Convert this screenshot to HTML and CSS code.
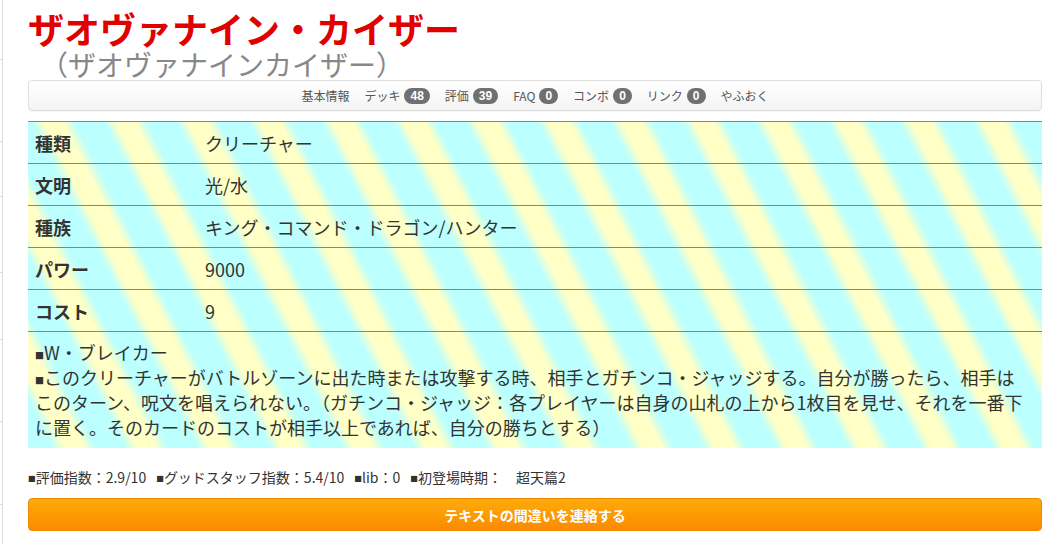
FILE: index.html
```html
<!DOCTYPE html>
<html lang="ja">
<head>
<meta charset="utf-8">
<title>ザオヴァナイン・カイザー</title>
<link rel="stylesheet" href="styles.css">
</head>
<body>
<div class="page">
  <div class="side">
    <div class="tick t1"></div>
    <div class="tick t2"></div>
    <div class="tick t3"></div>
    <div class="tick t4"></div>
    <div class="tick t5"></div>
    <div class="tick t6"></div>
    <div class="tick t7"></div>
  </div>
  <div class="main">
    <h1 class="title">ザオヴァナイン・カイザー</h1>
    <div class="subtitle">（ザオヴァナインカイザー）</div>
    <nav class="tabs">
      <span class="tab">基本情報</span>
      <span class="tab">デッキ<span class="badge">48</span></span>
      <span class="tab">評価<span class="badge">39</span></span>
      <span class="tab">FAQ<span class="badge">0</span></span>
      <span class="tab">コンボ<span class="badge">0</span></span>
      <span class="tab">リンク<span class="badge">0</span></span>
      <span class="tab">やふおく</span>
    </nav>
    <div class="spec">
      <div class="row"><div class="label">種類</div><div class="value">クリーチャー</div></div>
      <div class="row"><div class="label">文明</div><div class="value">光/水</div></div>
      <div class="row"><div class="label">種族</div><div class="value">キング・コマンド・ドラゴン/ハンター</div></div>
      <div class="row"><div class="label">パワー</div><div class="value">9000</div></div>
      <div class="row"><div class="label">コスト</div><div class="value">9</div></div>
      <div class="desc"><span class="sq">■</span>W・ブレイカー<br><span class="sq">■</span>このクリーチャーがバトルゾーンに出た時または攻撃する時、相手とガチンコ・ジャッジする。自分が勝ったら、相手は<br>このターン、呪文を唱えられない。（ガチンコ・ジャッジ：各プレイヤーは自身の山札の上から1枚目を見せ、それを一番下<br>に置く。そのカードのコストが相手以上であれば、自分の勝ちとする）</div>
    </div>
    <div class="stats">
      <span class="stat"><span class="sq">■</span>評価指数：2.9/10</span>
      <span class="stat"><span class="sq">■</span>グッドスタッフ指数：5.4/10</span>
      <span class="stat"><span class="sq">■</span>lib：0</span>
      <span class="stat"><span class="sq">■</span>初登場時期：　超天篇2</span>
    </div>
    <button class="report" type="button">テキストの間違いを連絡する</button>
  </div>
</div>
</body>
</html>
```
FILE: styles.css
```css
* { box-sizing: border-box; }
html, body {
  margin: 0;
  padding: 0;
  background: #fff;
}
body {
  font-family: "Noto Sans CJK JP", "Liberation Sans", sans-serif;
  color: #333;
}
.page {
  display: flex;
  min-height: 544px;
}
.side {
  width: 3px;
  border-right: 1px solid #dcdcdc;
  display: flex;
  flex-direction: column;
}
.tick { border-bottom: 1px solid #dcdcdc; }
.t1 { height: 60px; }
.t2 { height: 82px; }
.t3 { height: 55px; }
.t4 { height: 76px; }
.t5 { height: 67px; }
.t6 { height: 82px; }
.t7 { height: 83px; }
.main {
  flex: 1;
  padding: 8px 6px 0 25px;
}
.title {
  margin: 0;
  font-size: 36px;
  line-height: 40px;
  font-weight: bold;
  color: #e00000;
}
.subtitle {
  font-size: 28px;
  line-height: 32px;
  color: #888;
  padding-left: 12px;
}
.tabs {
  height: 31px;
  border: 1px solid #dedede;
  border-radius: 4px;
  background: linear-gradient(#ffffff, #f4f4f4);
  box-shadow: 0 1px 1px rgba(0,0,0,0.04);
  display: flex;
  justify-content: center;
  align-items: center;
  gap: 15px;
  font-size: 12px;
  color: #555;
  margin-bottom: 10px;
}
.tab {
  display: flex;
  align-items: center;
}
.badge {
  margin-left: 4px;
  background: #707070;
  color: #fff;
  font-weight: bold;
  font-size: 12px;
  line-height: 16px;
  height: 16px;
  padding: 0 6px;
  border-radius: 8px;
  font-family: "Liberation Sans", sans-serif;
}
.spec {
  border-top: 1px solid #858585;
  background: repeating-linear-gradient(63deg,
    #bbffff 0px, #bbffff 22px,
    #ffffc6 33px, #ffffc6 50px,
    #bbffff 61px, #bbffff 64.4px);
  font-size: 18px;
}
.row {
  display: flex;
  align-items: center;
  height: 42px;
  border-bottom: 1px solid #858585;
}
.label {
  width: 177px;
  padding-left: 7px;
  font-weight: bold;
}
.value { flex: 1; }
.desc {
  padding: 8px 4px 8px 7px;
  line-height: 25px;
  white-space: nowrap;
}
.sq {
  font-size: 0.5em;
  line-height: 1;
  vertical-align: 1px;
}
.stats {
  margin-top: 19px;
  font-size: 14px;
  line-height: 20px;
  display: flex;
  gap: 10px;
}
.stats .sq { font-size: 0.55em; }
.report {
  display: block;
  width: 100%;
  margin-top: 11px;
  height: 33px;
  border: 1px solid #ee8a00;
  border-radius: 4px;
  background: linear-gradient(#ffab0a, #f98b00);
  color: #fff;
  font-family: inherit;
  font-size: 14px;
  font-weight: bold;
  cursor: pointer;
}
```
